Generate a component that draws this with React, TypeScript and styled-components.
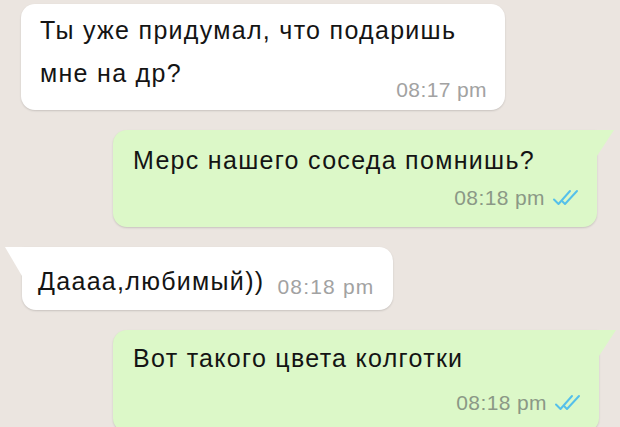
import React from 'react';
import styled, { createGlobalStyle } from 'styled-components';

const GlobalStyle = createGlobalStyle`
    html, body {
        margin: 0;
        padding: 0;
        background: #ebe5e0;
    }
    body {
        font-family: "Liberation Sans", Arial, sans-serif;
        overflow: hidden;
    }
`;

const Chat = styled.div`
    display: flex;
    flex-direction: column;
    gap: 20px;
    width: 620px;
    height: 427px;
    padding-top: 4px;
    box-sizing: border-box;
    overflow: hidden;
    background: #ebe5e0;
`;

const Bubble = styled.div<{
    $out?: boolean;
    $tail?: boolean;
    $width: number;
    $height: number;
    $pad: number;
}>`
    position: relative;
    box-sizing: border-box;
    flex-shrink: 0;
    width: ${(p) => p.$width}px;
    height: ${(p) => p.$height}px;
    margin-left: ${(p) => (p.$out ? 113 : p.$tail ? 22 : 21)}px;
    padding: ${(p) => p.$pad}px ${(p) => (p.$out ? 17 : 18)}px 0 ${(p) => (p.$out ? 20 : p.$tail ? 16 : 19)}px;
    background: ${(p) => (p.$out ? '#dcf8c8' : '#ffffff')};
    border-radius: 14px;
    border-top-left-radius: ${(p) => (!p.$out && p.$tail ? 0 : 14)}px;
    border-top-right-radius: ${(p) => (p.$out ? 0 : 14)}px;
    box-shadow: 0 1px 2px rgba(0, 0, 0, 0.15);

    /* little tail in the top corner */
    &::before {
        content: '';
        display: ${(p) => (p.$tail || p.$out ? 'block' : 'none')};
        position: absolute;
        top: 0;
        width: 17px;
        background: ${(p) => (p.$out ? '#dcf8c8' : '#ffffff')};
        ${(p) =>
            p.$out
                ? 'right: -17px; height: 26px; clip-path: polygon(0 0, 100% 0, 0 100%);'
                : 'left: -17px; height: 29px; clip-path: polygon(0 0, 100% 0, 100% 100%);'}
    }
`;

const Text = styled.div<{ $lh?: number }>`
    font-size: 25px;
    line-height: ${(p) => p.$lh ?? 28}px;
    letter-spacing: 1.3px;
    color: #141414;
    white-space: nowrap;
`;

const Meta = styled.div<{ $top: number }>`
    display: flex;
    justify-content: flex-end;
    align-items: center;
    gap: 7px;
    margin-top: ${(p) => p.$top}px;
`;

const Time = styled.span<{ $out?: boolean; $top?: number; $spacing?: number }>`
    display: block;
    font-size: 21px;
    line-height: 24px;
    letter-spacing: ${(p) => p.$spacing ?? 0.4}px;
    white-space: nowrap;
    margin-top: ${(p) => p.$top ?? 0}px;
    color: ${(p) => (p.$out ? '#8b9886' : '#a2a2a2')};
`;

const InlineRow = styled.div`
    display: flex;
    align-items: flex-start;
    gap: 13px;
`;

const Ticks = () => (
    <svg width="28" height="18" viewBox="0 0 28 18" fill="none">
        <path
            d="M2 10.5 L6.5 15 L18 2"
            stroke="#55c0ea"
            strokeWidth="2"
            strokeLinecap="round"
            strokeLinejoin="round"
        />
        <path
            d="M10.5 12.5 L13 15 L25 2"
            stroke="#55c0ea"
            strokeWidth="2"
            strokeLinecap="round"
            strokeLinejoin="round"
        />
    </svg>
);

const App = () => (
    <>
        <GlobalStyle />
        <Chat>
            {/* incoming, no tail */}
            <Bubble $width={484} $height={106} $pad={5}>
                <Text $lh={43}>
                    Ты уже придумал, что подаришь
                    <br />
                    мне на др?
                </Text>
                <Meta $top={-17}>
                    <Time>08:17 pm</Time>
                </Meta>
            </Bubble>

            {/* outgoing */}
            <Bubble $out $width={484} $height={97} $pad={16}>
                <Text>Мерс нашего соседа помнишь?</Text>
                <Meta $top={12}>
                    <Time $out>08:18 pm</Time>
                    <Ticks />
                </Meta>
            </Bubble>

            {/* incoming with tail */}
            <Bubble $tail $width={371} $height={63} $pad={20}>
                <InlineRow>
                    <Text>Даааа,любимый))</Text>
                    <Time $top={8} $spacing={1.2}>08:18 pm</Time>
                </InlineRow>
            </Bubble>

            {/* outgoing */}
            <Bubble $out $width={486} $height={102} $pad={14}>
                <Text>Вот такого цвета колготки</Text>
                <Meta $top={19}>
                    <Time $out>08:18 pm</Time>
                    <Ticks />
                </Meta>
            </Bubble>
        </Chat>
    </>
);

export default App;
